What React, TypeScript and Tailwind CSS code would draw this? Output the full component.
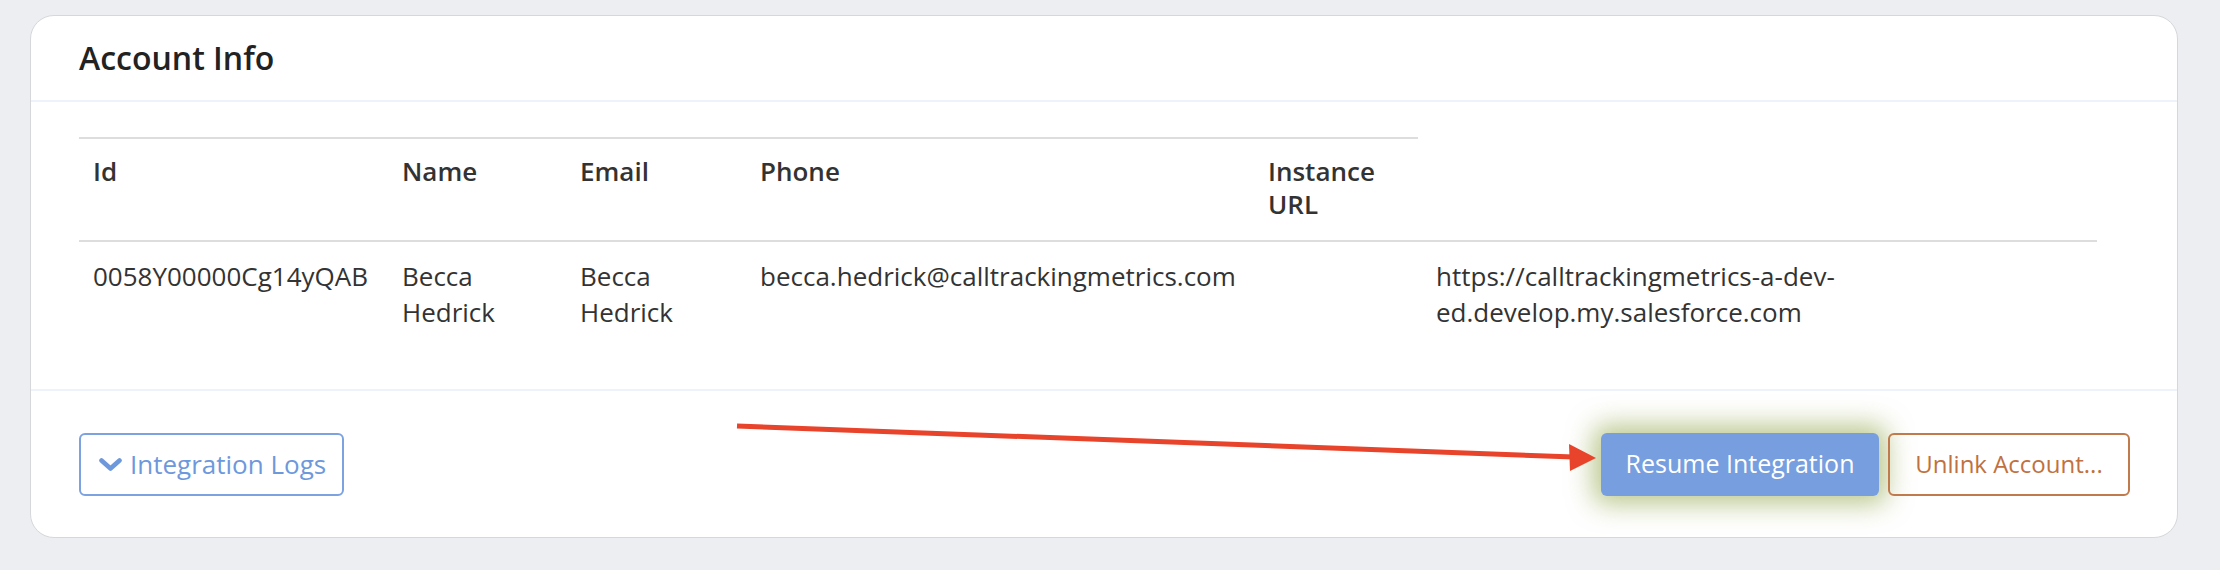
import React from 'react';

const headers = ['Id', 'Name', 'Email', 'Phone', 'Instance URL'];

const row = [
  '0058Y00000Cg14yQAB',
  'Becca Hedrick',
  'Becca Hedrick',
  'becca.hedrick@calltrackingmetrics.com',
  '',
  'https://calltrackingmetrics-a-dev-ed.develop.my.salesforce.com',
];

function ChevronDown() {
  return (
    <svg width="23" height="13" viewBox="0 0 23 13" className="shrink-0">
      <polyline
        points="2.5,2.5 11.5,10.5 20.5,2.5"
        fill="none"
        stroke="currentColor"
        strokeWidth="4.6"
        strokeLinecap="round"
        strokeLinejoin="round"
      />
    </svg>
  );
}

export default function App() {
  return (
    <div className="relative min-h-screen bg-[#edeef2] pl-[30px] pr-[42px] pt-[15px] pb-[32px] font-['Open_Sans',sans-serif]">
      <div className="overflow-hidden rounded-[24px] border border-[#d6d7db] bg-white">
        {/* header */}
        <div className="flex h-[86px] items-center border-b-2 border-[#edf2fb] pl-[48px]">
          <h2 className="text-[32px] font-semibold text-[#222222]">Account Info</h2>
        </div>

        {/* table */}
        <div className="h-[287px] pl-[48px] pt-[35px]">
          <div className="grid w-[2018px] grid-cols-[309px_178px_180px_508px_164px_679px] text-[26px] text-[#333333]">
            {headers.map((h) => (
              <div
                key={h}
                className="h-[103px] border-t-2 border-[#dddddd] px-[14px] pt-[16px] font-semibold leading-[33px]"
              >
                {h}
              </div>
            ))}
            <div />
            {row.map((cell, i) => (
              <div
                key={i}
                className={
                  i === 5
                    ? 'border-t-2 border-[#dddddd] pl-[18px] pr-[14px] pt-[16px] pb-[16px] leading-[36px]'
                    : 'border-t-2 border-[#dddddd] px-[14px] pt-[16px] pb-[16px] leading-[36px]'
                }
              >
                {cell}
              </div>
            ))}
          </div>
        </div>

        {/* footer */}
        <div className="flex h-[148px] items-center justify-between border-t-2 border-[#edf2fb] pl-[48px] pr-[47px]">
          <button className="flex h-[63px] items-center gap-[8px] rounded-[6px] border-2 border-[#7da2e0] pl-[18px] pr-[16px] text-[26px] text-[#6e98dc]">
            <ChevronDown />
            <span>Integration Logs</span>
          </button>
          <div className="flex items-center gap-[9px]">
            <button className="flex h-[63px] w-[278px] items-center justify-center rounded-[6px] bg-[#779ede] text-[25px] text-white shadow-[0_0_26px_8px_rgba(120,145,30,0.5)]">
              Resume Integration
            </button>
            <button className="flex h-[63px] w-[242px] items-center justify-center rounded-[6px] border-2 border-[#c07a4b] text-[24px] text-[#c0713f]">
              Unlink Account...
            </button>
          </div>
        </div>
      </div>

      {/* annotation arrow */}
      <svg
        className="pointer-events-none absolute left-0 top-0"
        width="2220"
        height="570"
        viewBox="0 0 2220 570"
      >
        <line x1="737" y1="426" x2="1574" y2="457" stroke="#e8432b" strokeWidth="5" />
        <polygon points="1596,458 1569,444 1570,471" fill="#e8432b" />
      </svg>
    </div>
  );
}
